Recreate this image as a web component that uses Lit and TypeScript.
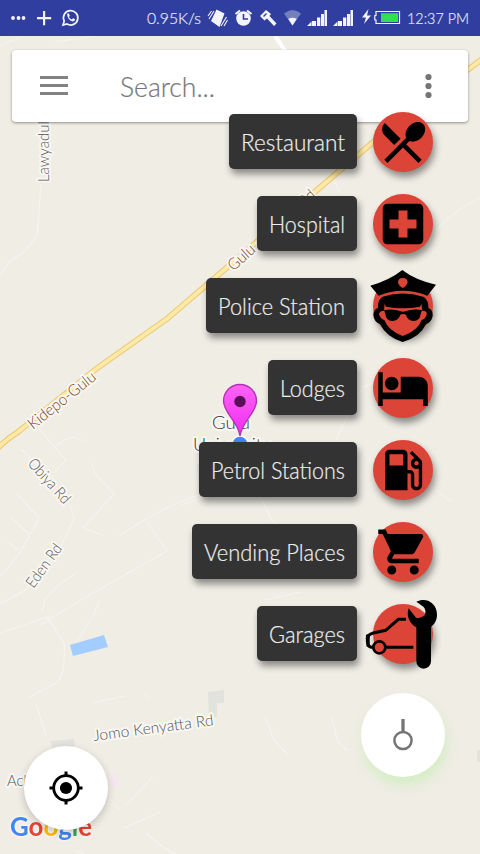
import { LitElement, html, svg, css } from "lit";
import { customElement, property } from "lit/decorators.js";

const restaurant = svg`<path transform="translate(3 3) scale(2.25)" d="M8.1 13.34l2.83-2.83L3.91 3.5c-1.56 1.56-1.56 4.09 0 5.66l4.19 4.18zm6.78-1.81c1.53.71 3.68.21 5.27-1.38 1.91-1.91 2.28-4.65.81-6.12-1.46-1.46-4.2-1.1-6.12.81-1.59 1.59-2.09 3.74-1.38 5.27L3.7 19.87l1.41 1.41L12 14.41l6.88 6.88 1.41-1.41L13.41 13l1.47-1.47z"/>`;
const hospital = svg`<path transform="translate(3 3) scale(2.25)" d="M19 3H5c-1.1 0-1.99.9-1.99 2L3 19c0 1.1.9 2 2 2h14c1.1 0 2-.9 2-2V5c0-1.1-.9-2-2-2zm-1 11h-4v4h-4v-4H6v-4h4V6h4v4h4v4z"/>`;
const hotel = svg`<path transform="translate(3 3) scale(2.25)" d="M7 13c1.66 0 3-1.34 3-3S8.66 7 7 7s-3 1.34-3 3 1.34 3 3 3zm12-6h-8v7H3V5H1v15h2v-3h18v3h2v-9c0-2.21-1.79-4-4-4z"/>`;
const petrol = svg`<path transform="translate(3 3) scale(2.25)" d="M19.77 7.23l.01-.01-3.72-3.72L15 4.56l2.11 2.11c-.94.36-1.61 1.26-1.61 2.33 0 1.38 1.12 2.5 2.5 2.5.36 0 .69-.08 1-.21v7.21c0 .55-.45 1-1 1s-1-.45-1-1V14c0-1.1-.9-2-2-2h-1V5c0-1.1-.9-2-2-2H6c-1.1 0-2 .9-2 2v16h10v-7.5h1.5v5c0 1.38 1.12 2.5 2.5 2.5s2.5-1.12 2.5-2.5V9c0-.69-.28-1.32-.73-1.77zM12 10H6V5h6v5zm6 0c-.55 0-1-.45-1-1s.45-1 1-1 1 .45 1 1-.45 1-1 1z"/>`;
const cart = svg`<path transform="translate(3 3) scale(2.25)" d="M7 18c-1.1 0-1.99.9-1.99 2S5.9 22 7 22s2-.9 2-2-.9-2-2-2zM1 2v2h2l3.6 7.59-1.35 2.45c-.16.28-.25.61-.25.96 0 1.1.9 2 2 2h12v-2H7.42c-.14 0-.25-.11-.25-.25l.03-.12.9-1.63h7.45c.75 0 1.41-.41 1.75-1.03l3.58-6.49c.08-.14.12-.31.12-.48 0-.55-.45-1-1-1H5.21l-.94-2H1zm16 16c-1.1 0-1.99.9-1.99 2s.89 2 1.99 2 2-.9 2-2-.9-2-2-2z"/>`;
const police = svg`<g transform="translate(-183 -16) scale(.33333)">
  <path d="M541 77Q600 60 637 30Q675 60 738 74L712 107Q638 77 566 107Z"/>
  <path d="M578 110Q638 91 700 110C712 118 716 130 715 143Q730 150 728 168Q724 188 708 192Q690 232 638 246Q590 232 570 192Q552 186 550 165Q550 150 564 143Q562 120 578 110Z"/>
  <path fill="#db4437" d="M638 54Q652 54 653 66Q652 76 638 84Q625 76 624 66Q625 54 638 54Z"/>
  <path fill="#db4437" d="M584 130Q638 154 694 130L697 152Q713 153 710 163Q706 178 695 180Q684 212 638 228Q595 212 583 180Q570 176 567 162Q568 153 582 152Z"/>
  <path d="M580 124Q638 156 698 124L690 140Q638 150 588 140Z"/>
  <path d="M582 150Q610 145 632 154Q638 156 646 154Q668 145 696 150L692 162Q690 182 671 183Q652 182 648 164Q638 160 631 164Q626 182 607 183Q588 182 586 162Z"/>
</g>`;
const garage = svg`<g transform="translate(-193 -94) scale(.33333)">
  <path fill="none" stroke="#000" stroke-width="9" d="M678 328H655L617 361L580 369Q562 374 562 385L565 405Q567 412 580 412M617 412H700"/>
  <path d="M558 374L570 372L568 410L560 410Q556 392 558 374Z"/>
  <circle cx="598" cy="412" r="18" fill="#db4437" stroke="#000" stroke-width="8"/>
  <path d="M709 275C742 260 771 282 771 314C771 331 763 343 753 350V454A22 22 0 0 1 709 454V352C688 342 678 316 686 295L708 323Q722 326 734 316Q740 300 730 290Z"/>
</g>`;

const places = [
  { name: "Restaurant", w: 104, icon: restaurant },
  { name: "Hospital", w: 76, icon: hospital },
  { name: "Police Station", w: 127, icon: police },
  { name: "Lodges", w: 65, icon: hotel },
  { name: "Petrol Stations", w: 134, icon: petrol },
  { name: "Vending Places", w: 141, icon: cart },
  { name: "Garages", w: 76, icon: garage },
];

const fitText = (text: string, w: number, h: number, base: number, cls: string) => html`
  <svg class="fit ${cls}" width=${w} height=${h}>
    <text x="0" y=${base} textLength=${w} lengthAdjust="spacingAndGlyphs">${text}</text>
  </svg>`;

@customElement("map-canvas")
export class MapCanvas extends LitElement {
  static styles = css`
    :host { display: block; width: 480px; height: 854px; }
    svg { display: block; font-family: "Lato", sans-serif; font-weight: 300; }
    .road { fill: none; stroke: #f6f4ee; stroke-width: 1.1; }
    .halo { paint-order: stroke; stroke: #f9f7f3; stroke-width: 4; stroke-linejoin: round; }
    .street { font-size: 15.5px; fill: #555; }
    .highway { font-size: 16px; fill: #7d3f10; }
    .place { font-size: 18px; fill: #333; }
    .google { font-size: 27.5px; font-weight: 700; filter: drop-shadow(0 0 1px #fbfaf7) drop-shadow(0 0 1px #fbfaf7); }
  `;
  render() {
    return html`<svg width="480" height="854" viewBox="0 0 480 854">
      <defs>
        <linearGradient id="pin" x1="0" y1="0" x2="0" y2="1">
          <stop offset="0" stop-color="#fd63f7"/><stop offset="1" stop-color="#f02cee"/>
        </linearGradient>
      </defs>
      <rect width="480" height="854" fill="#f0ede5"/>
      <g class="road">
        <path d="M0 45L20 38M55 42L95 36M41 185L37 236L25 251L8 263L0 276"/>
        <path d="M39 429L66 460L54 473M56 446L64 440L74 437L84 441M92 463L95 474L114 494L83 528L103 535M21 449L40 468M16 493L39 518Q28 540 18 555T0 575M10 517L29 534M7 541L18 550M0 604L24 591L38 578Q62 550 74 518L70 504"/>
        <path d="M119 536Q165 505 200 495M147 522L160 541L167 551L86 597L40 625M76 573L60 584L45 599L42 612M100 600L92 618M0 633L50 616M48 618L64 643Q66 670 58 682L28 698M36 704L46 735M92 703L125 696M145 694L148 698M90 620L78 640"/>
        <path d="M110 799L120 810M125 807L153 776M124 828L160 812M146 833Q160 847 176 854M76 850L84 854"/>
        <path d="M265 716L274 740L288 755M331 716L338 742L348 751M436 230Q455 210 480 198M418 330L396 357M388 377L363 387L350 410L336 440M258 492L272 520M182 505L208 495M440 494L452 501M268 514L276 525M300 592L265 600M334 180L340 193"/>
      </g>
      <path d="M275 36L286 52" stroke="#fff" stroke-width="4"/>
      <path fill="none" stroke="#e9c96f" stroke-width="5.800" d="M-4 450Q4 441 18 432L96 369L168 318L210 282L345 166L385 132L482 59"/>
      <path fill="none" stroke="#ffe9a8" stroke-width="3.800" d="M-4 450Q4 441 18 432L96 369L168 318L210 282L345 166L385 132L482 59"/>
      <path d="M70 645L104 635L108 647L73 656Z" fill="#a3ccff"/>
      <path d="M208 692L224 690V703H217V717H209Z" fill="#e2e3dd"/>
      <path d="M51 741L74 739L75 750H52ZM197 464h8v28h-6ZM477 750h3v12h-3Z" fill="#e2e3dd"/>
      <path d="M109 774L118 773L119 787L111 789Z" fill="#f5e7ee"/>

      <text class="halo street" transform="translate(48.500 182) rotate(-90)" textLength="82" lengthAdjust="spacingAndGlyphs">Lawyadul Rd</text>
      <text class="halo highway" transform="translate(33 430) rotate(-38.500)" textLength="82" lengthAdjust="spacingAndGlyphs">Kidepo-Gulu</text>
      <text class="halo highway" transform="translate(233.500 271.500) rotate(-42)" textLength="112" lengthAdjust="spacingAndGlyphs">Gulu - Kitgum Rd</text>
      <text class="halo street" transform="translate(27 464) rotate(48)" textLength="55" lengthAdjust="spacingAndGlyphs">Obiya Rd</text>
      <text class="halo street" transform="translate(33.500 589) rotate(-54)" textLength="50" lengthAdjust="spacingAndGlyphs">Eden Rd</text>
      <text class="halo street" transform="translate(94 741) rotate(-7.500)" textLength="121" lengthAdjust="spacingAndGlyphs">Jomo Kenyatta Rd</text>
      <text class="halo street" transform="translate(7 786)" textLength="36" lengthAdjust="spacingAndGlyphs">Achol</text>
      <text class="halo place" x="212" y="429" textLength="38" lengthAdjust="spacingAndGlyphs">Gulu</text>
      <text class="halo place" x="193" y="451" textLength="78" lengthAdjust="spacingAndGlyphs">University</text>
      <circle cx="240" cy="444" r="8" fill="#4285f4" stroke="#fff" stroke-width="1.500"/>
      <path d="M240 436C238 421 223.500 413 223.500 401A16.500 16.500 0 0 1 256.500 401C256.500 413 242 421 240 436Z" fill="url(#pin)" stroke="#b32fb4" stroke-width="1.300"/>
      <circle cx="240" cy="401.500" r="5.700" fill="#5a1058"/>
      <text class="google" x="10" y="836" textLength="82" lengthAdjust="spacingAndGlyphs"><tspan fill="#4285f4">G</tspan><tspan fill="#ea4335">o</tspan><tspan fill="#fbbc05">o</tspan><tspan fill="#4285f4">g</tspan><tspan fill="#34a853">l</tspan><tspan fill="#ea4335">e</tspan></text>
    </svg>`;
  }
}

@customElement("status-bar")
export class StatusBar extends LitElement {
  static styles = css`
    :host { display: flex; align-items: center; height: 36px; padding: 0 11px; box-sizing: border-box;
      background: #303f9f; font-family: "Lato", sans-serif; font-weight: 300; }
    svg { display: block; flex: none; fill: #f3f4fb; overflow: visible; }
    .side { display: flex; align-items: center; }
    .left { gap: 11px; }
    .right { margin-left: auto; gap: 7px; }
    .fit { font-size: 16.5px; fill: #e6e8f6; stroke: #e6e8f6; stroke-width: .2; }
    .alarm, .tool { margin-left: 1px; }
    .bars { margin-right: -1px; }
    .wifi { margin-right: -1px; }
    .bolt { margin-left: 3px; }
    .battery { margin: 0 0 0 -4px; }
  `;
  render() {
    const bars = svg`<path d="M0 26L4.500 21.500V26zM5 21h4v5H5zM10 17.500h3.300V26H10zM14 14h3v12h-3zM17.500 10H20v16h-2.500z"/>`;
    return html`
      <div class="side left">
        <svg width="15" height="36"><circle cx="2" cy="18" r="1.900"/><circle cx="7.500" cy="18" r="1.900"/><circle cx="12.500" cy="18" r="1.900"/></svg>
        <svg width="14" height="36"><path d="M6 11h2.200v6h6v2.200h-6v6H6v-6H0V17h6z"/></svg>
        <svg width="16" height="36"><path fill="none" stroke="#f3f4fb" stroke-width="1.700" d="M1 25L2.200 21A7.200 7.200 0 1 1 5 24Z"/><path d="M5 14q1.500-1.500 2.200.2l.6 1.500-.9 1.200q1 1.900 2.900 2.500l1.200-1.200 2 .9q.2 2.300-2.200 2.400Q6 20.500 5 14z"/></svg>
      </div>
      <div class="side right">
        ${fitText("0.95K/s", 54, 36, 24, "")}
        <svg width="19" height="36"><path d="M8.500 9.500L16.500 13.500 11.500 27 3 21Z"/><path fill="none" stroke="#f3f4fb" stroke-width="1.100" d="M6 11L1 19M3.500 11L0 16M18.500 17L13 26M19.500 20L16 26"/></svg>
        <svg class="alarm" width="17" height="36"><circle cx="8.500" cy="18.500" r="7.300"/><path fill="none" stroke="#f3f4fb" stroke-width="2" d="M.5 14L5 10.500M16.500 14L12 10.500"/><path fill="none" stroke="#303f9f" stroke-width="1.600" d="M8.500 14v5H13"/></svg>
        <svg class="tool" width="17" height="36"><path d="M0 16L6 10 11 14 9.500 16 16.500 23.500 14 26 7 18.500 4.500 20.500Z"/><path d="M3.500 16.500L6.500 13.500" stroke="#303f9f" stroke-width="1.500"/></svg>
        <svg class="wifi" width="17" height="36"><path fill="#7480be" d="M0 13.500Q8.500 6.500 17 13.500L8.500 25.500Z"/><path d="M4.300 19Q8.500 16.500 12.700 19L8.500 25.500Z"/></svg>
        <svg class="bars" width="20" height="36">${bars}</svg>
        <svg class="bars" width="20" height="36">${bars}</svg>
        <svg class="bolt" width="9" height="36"><path d="M6.500 9L0 17.500H4L2 24 9 15.500H5Z"/></svg>
        <svg class="battery" width="26" height="36"><path d="M2 11.500H25.500V23.500H2V20H.8V15.500H2Z" fill="none" stroke="#f3f4fb" stroke-width="1.200"/><path d="M7 13.200H24V22H7Z" fill="#32df50"/></svg>
        ${fitText("12:37 PM", 62, 36, 24, "")}
      </div>`;
  }
}

@customElement("place-row")
export class PlaceRow extends LitElement {
  @property({ attribute: false }) place = places[0];
  static styles = css`
    :host { display: flex; align-items: flex-start; gap: 16px; height: 60px; }
    .label { height: 55px; margin-top: 2px; padding: 0 12px; border-radius: 5px; background: #333; box-shadow: 2px 5px 7px rgba(0,0,0,.42);
      font-family: "Lato", sans-serif; font-weight: 300; }
    .fit { display: block; overflow: visible; font-size: 22.5px; fill: #eee; stroke: #eee; stroke-width: .2; }
    .disc { width: 60px; height: 60px; border-radius: 50%; background: #db4437; box-shadow: 2px 5px 7px rgba(0,0,0,.42); }
    .glyph { display: block; overflow: visible; }
  `;
  render() {
    return html`
      <div class="label">${fitText(this.place.name, this.place.w, 55, 36.5, "")}</div>
      <div class="disc"><svg class="glyph" width="60" height="60">${this.place.icon}</svg></div>`;
  }
}

@customElement("app-root")
export class AppRoot extends LitElement {
  static styles = css`
    :host { display: block; position: relative; width: 480px; height: 854px; overflow: hidden; }
    map-canvas { position: absolute; inset: 0; }
    .chrome { position: relative; }
    .search { display: flex; align-items: center; height: 72px; margin: 14px 12px 0; padding: 0 36px 0 28px; box-sizing: border-box;
      border-radius: 4px; background: #fff; box-shadow: 0 1px 3px rgba(0,0,0,.4); }
    .search svg { display: block; overflow: visible; }
    .menu { fill: #828282; }
    .query { margin-left: 52px; font-family: "Lato", sans-serif; font-weight: 300; font-size: 27px; fill: #777; stroke: #777; stroke-width: .2; }
    .more { margin-left: auto; fill: #757575; }
    .speed-dial { position: absolute; top: 112px; right: 35px; display: flex; flex-direction: column; align-items: flex-end; gap: 22px; }
    place-row { margin-right: 12px; }
    .fab { width: 84px; height: 84px; border-radius: 50%; background: #fff; }
    .fab svg { display: block; }
    .toggle { margin-top: 7px; box-shadow: 2px 8px 12px rgba(185,240,165,.5); }
    .locate { position: absolute; left: 24px; top: 746px; box-shadow: 0 3px 9px rgba(0,0,0,.2); }
  `;
  render() {
    return html`
      <map-canvas></map-canvas>
      <div class="chrome">
        <status-bar></status-bar>
        <div class="search">
          <svg class="menu" width="28" height="22"><path d="M0 1h28v3H0zM0 9h28v3H0zM0 17h28v3H0z"/></svg>
          ${fitText("Search...", 95, 72, 46.5, "query")}
          <svg class="more" width="7" height="26"><circle cx="3.500" cy="4" r="3.100"/><circle cx="3.500" cy="13" r="3.100"/><circle cx="3.500" cy="22" r="3.100"/></svg>
        </div>
      </div>
      <div class="fab locate">
        <svg width="84" height="84"><circle cx="42" cy="42" r="12.300" fill="none" stroke="#000" stroke-width="2.800"/><circle cx="42" cy="42" r="6.100"/><path stroke="#000" stroke-width="3" d="M42 25.500v5M42 53.500v5M25.500 42h5M53.500 42h5"/></svg>
      </div>
      <div class="speed-dial">
        ${places.map((p) => html`<place-row .place=${p}></place-row>`)}
        <div class="fab toggle">
          <svg width="84" height="84"><circle cx="42" cy="47.500" r="8.600" fill="none" stroke="#757575" stroke-width="2.500"/><path d="M42 26v13" stroke="#757575" stroke-width="3.300"/></svg>
        </div>
      </div>`;
  }
}
